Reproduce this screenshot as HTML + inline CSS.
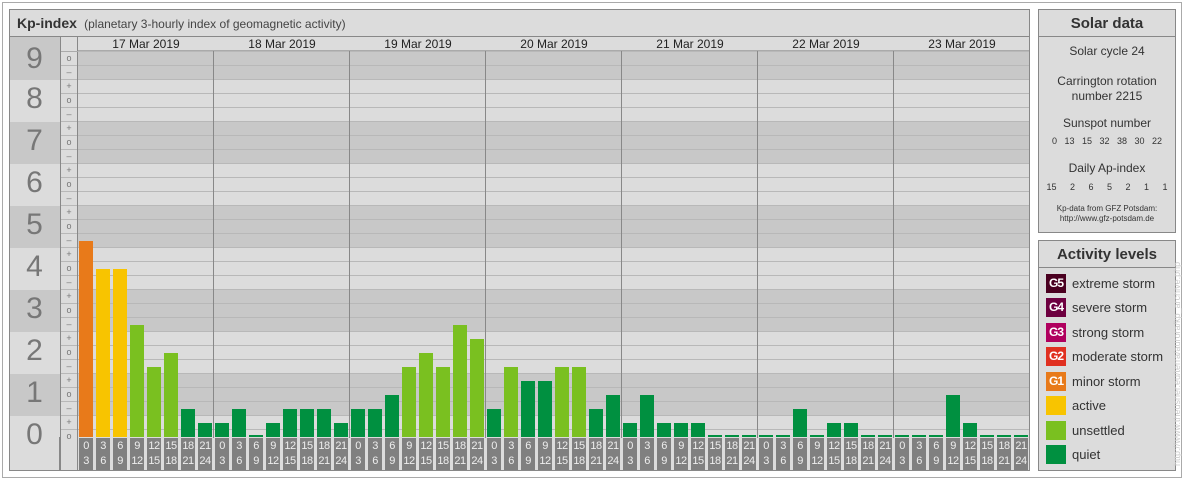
<!DOCTYPE html>
<html><head><meta charset="utf-8"><style>
*{margin:0;padding:0;box-sizing:border-box}
body{width:1184px;height:480px;background:#fff;font-family:"Liberation Sans",sans-serif;position:relative;overflow:hidden;color:#333}
.a{position:absolute}
.outer{left:2px;top:2px;width:1180px;height:476px;border:1px solid #aaa}
.panel{border:1px solid #888;background:#dcdcdc}
.lab{position:absolute;width:14px;height:32px;background:#808080;color:#eee;font-size:11px;line-height:15px;text-align:center;top:438px;padding-top:1px;letter-spacing:-0.5px}
.sym{position:absolute;left:61px;width:16px;text-align:center;font-size:9px;color:#777;line-height:10px}
.big{position:absolute;left:9px;width:51px;text-align:center;font-size:30px;color:#777;line-height:30px}
.date{position:absolute;top:37px;width:136px;text-align:center;font-size:12px;line-height:15px;color:#222}
.sd{position:absolute;left:1038px;width:138px;text-align:center;color:#333}
.lg{position:absolute;left:1046px;width:20px;height:19px;color:#fff;font-size:12px;line-height:19px;text-align:center;font-weight:bold;letter-spacing:-1px}
.lt{position:absolute;left:1072px;font-size:13px;color:#333;line-height:19px}
</style></head><body>
<div class="a outer"></div>
<div class="a panel" style="left:9px;top:9px;width:1021px;height:462px"></div>
<div class="a" style="left:10px;top:10px;width:1019px;height:27px;border-bottom:1px solid #888;background:#dcdcdc"></div>
<div class="a" style="left:17px;top:14px;font-size:14px;line-height:18px"><b style="color:#333">Kp-index</b> <span style="font-size:12px;color:#444">&nbsp;(planetary 3-hourly index of geomagnetic activity)</span></div>
<div class="a" style="left:10px;top:37px;width:50px;height:433px;background:#dcdcdc;border-right:1px solid #888"></div>
<div class="a" style="left:61px;top:37px;width:17px;height:433px;background:#dcdcdc;border-right:1px solid #888"></div>
<div id="bands"></div>
<div class="a" style="left:61px;top:51px;width:17px;height:1px;background:#aaa"></div>
<div class="a" style="left:78px;top:37px;width:951px;height:14px;background:#dcdcdc;border-bottom:1px solid #aaa"></div>
<div class="date" style="left:78px">17 Mar 2019</div>
<div class="date" style="left:214px">18 Mar 2019</div>
<div class="date" style="left:350px">19 Mar 2019</div>
<div class="date" style="left:486px">20 Mar 2019</div>
<div class="date" style="left:622px">21 Mar 2019</div>
<div class="date" style="left:758px">22 Mar 2019</div>
<div class="date" style="left:894px">23 Mar 2019</div>
<div class="big" style="top:44px">9</div>
<div class="big" style="top:84px">8</div>
<div class="big" style="top:126px">7</div>
<div class="big" style="top:168px">6</div>
<div class="big" style="top:210px">5</div>
<div class="big" style="top:252px">4</div>
<div class="big" style="top:294px">3</div>
<div class="big" style="top:336px">2</div>
<div class="big" style="top:378px">1</div>
<div class="big" style="top:420px">0</div>

<div class="a panel" style="left:1038px;top:9px;width:138px;height:224px"></div>
<div class="a" style="left:1039px;top:10px;width:136px;height:27px;border-bottom:1px solid #888"></div>
<div class="sd" style="top:15px;font-size:15px;font-weight:bold;line-height:18px">Solar data</div>
<div class="sd" style="top:44px;font-size:12px;line-height:15px">Solar cycle 24</div>
<div class="sd" style="top:74px;font-size:12px;line-height:15px">Carrington rotation<br>number 2215</div>
<div class="sd" style="top:116px;font-size:12px;line-height:15px">Sunspot number</div>
<div class="sd" style="top:136px;font-size:9px;word-spacing:5px">0 13 15 32 38 30 22</div>
<div class="sd" style="top:161px;font-size:12px;line-height:15px">Daily Ap-index</div>
<div class="sd" style="top:182px;font-size:9px;word-spacing:11px">15 2 6 5 2 1 1</div>
<div class="sd" style="top:204px;font-size:8px;line-height:10px">Kp-data from GFZ Potsdam:<br>http://www.gfz-potsdam.de</div>

<div class="a panel" style="left:1038px;top:240px;width:138px;height:231px"></div>
<div class="a" style="left:1039px;top:241px;width:136px;height:27px;border-bottom:1px solid #888"></div>
<div class="sd" style="top:246px;font-size:15px;font-weight:bold;line-height:18px">Activity levels</div>
<div class="lg" style="top:274px;background:#4a0020">G5</div><div class="lt" style="top:274px">extreme storm</div>
<div class="lg" style="top:298px;background:#6e0040">G4</div><div class="lt" style="top:298px">severe storm</div>
<div class="lg" style="top:323px;background:#b0005e">G3</div><div class="lt" style="top:323px">strong storm</div>
<div class="lg" style="top:347px;background:#e03020">G2</div><div class="lt" style="top:347px">moderate storm</div>
<div class="lg" style="top:372px;background:#e87a1a">G1</div><div class="lt" style="top:372px">minor storm</div>
<div class="lg" style="top:396px;background:#f8c400"></div><div class="lt" style="top:396px">active</div>
<div class="lg" style="top:421px;background:#7ac020"></div><div class="lt" style="top:421px">unsettled</div>
<div class="lg" style="top:445px;background:#009040"></div><div class="lt" style="top:445px">quiet</div>
<div class="a" style="left:1172px;top:466px;transform-origin:0 0;transform:rotate(-90deg);font-size:9px;color:#ccc;white-space:nowrap;width:230px">http://www.theusner.eu/terra/aurora/kp_archive.php</div>

<div class="a" style="left:78px;top:438px;width:951px;height:32px;background:#dcdcdc"></div>
<div class="lab" style="left:79px">0<br>3</div><div class="lab" style="left:96px">3<br>6</div><div class="lab" style="left:113px">6<br>9</div><div class="lab" style="left:130px">9<br>12</div><div class="lab" style="left:147px">12<br>15</div><div class="lab" style="left:164px">15<br>18</div><div class="lab" style="left:181px">18<br>21</div><div class="lab" style="left:198px">21<br>24</div>
<div class="lab" style="left:215px">0<br>3</div><div class="lab" style="left:232px">3<br>6</div><div class="lab" style="left:249px">6<br>9</div><div class="lab" style="left:266px">9<br>12</div><div class="lab" style="left:283px">12<br>15</div><div class="lab" style="left:300px">15<br>18</div><div class="lab" style="left:317px">18<br>21</div><div class="lab" style="left:334px">21<br>24</div>
<div class="lab" style="left:351px">0<br>3</div><div class="lab" style="left:368px">3<br>6</div><div class="lab" style="left:385px">6<br>9</div><div class="lab" style="left:402px">9<br>12</div><div class="lab" style="left:419px">12<br>15</div><div class="lab" style="left:436px">15<br>18</div><div class="lab" style="left:453px">18<br>21</div><div class="lab" style="left:470px">21<br>24</div>
<div class="lab" style="left:487px">0<br>3</div><div class="lab" style="left:504px">3<br>6</div><div class="lab" style="left:521px">6<br>9</div><div class="lab" style="left:538px">9<br>12</div><div class="lab" style="left:555px">12<br>15</div><div class="lab" style="left:572px">15<br>18</div><div class="lab" style="left:589px">18<br>21</div><div class="lab" style="left:606px">21<br>24</div>
<div class="lab" style="left:623px">0<br>3</div><div class="lab" style="left:640px">3<br>6</div><div class="lab" style="left:657px">6<br>9</div><div class="lab" style="left:674px">9<br>12</div><div class="lab" style="left:691px">12<br>15</div><div class="lab" style="left:708px">15<br>18</div><div class="lab" style="left:725px">18<br>21</div><div class="lab" style="left:742px">21<br>24</div>
<div class="lab" style="left:759px">0<br>3</div><div class="lab" style="left:776px">3<br>6</div><div class="lab" style="left:793px">6<br>9</div><div class="lab" style="left:810px">9<br>12</div><div class="lab" style="left:827px">12<br>15</div><div class="lab" style="left:844px">15<br>18</div><div class="lab" style="left:861px">18<br>21</div><div class="lab" style="left:878px">21<br>24</div>
<div class="lab" style="left:895px">0<br>3</div><div class="lab" style="left:912px">3<br>6</div><div class="lab" style="left:929px">6<br>9</div><div class="lab" style="left:946px">9<br>12</div><div class="lab" style="left:963px">12<br>15</div><div class="lab" style="left:980px">15<br>18</div><div class="lab" style="left:997px">18<br>21</div><div class="lab" style="left:1014px">21<br>24</div>

<div class="sym" style="top:53px">o</div><div class="sym" style="top:67px">–</div>
<div class="sym" style="top:81px">+</div><div class="sym" style="top:95px">o</div><div class="sym" style="top:109px">–</div>
<div class="sym" style="top:123px">+</div><div class="sym" style="top:137px">o</div><div class="sym" style="top:151px">–</div>
<div class="sym" style="top:165px">+</div><div class="sym" style="top:179px">o</div><div class="sym" style="top:193px">–</div>
<div class="sym" style="top:207px">+</div><div class="sym" style="top:221px">o</div><div class="sym" style="top:235px">–</div>
<div class="sym" style="top:249px">+</div><div class="sym" style="top:263px">o</div><div class="sym" style="top:277px">–</div>
<div class="sym" style="top:291px">+</div><div class="sym" style="top:305px">o</div><div class="sym" style="top:319px">–</div>
<div class="sym" style="top:333px">+</div><div class="sym" style="top:347px">o</div><div class="sym" style="top:361px">–</div>
<div class="sym" style="top:375px">+</div><div class="sym" style="top:389px">o</div><div class="sym" style="top:403px">–</div>
<div class="sym" style="top:417px">+</div><div class="sym" style="top:431px">o</div>

<script>
(function(){
var h='';
for(var n=0;n<=9;n++){
 var bot=437-21-42*(n-1); if(n==0)bot=437;
 var top=437-21-42*n; if(n==0)top=416;
 var c=(n%2)?'#c8c8c8':'#dcdcdc';
 var topL=(n==9)?37:top, topC=(n==9)?52:top;
 h+='<div class="a" style="left:10px;top:'+topL+'px;width:50px;height:'+(bot-topL)+'px;background:'+c+'"></div>';
 h+='<div class="a" style="left:78px;top:'+topC+'px;width:951px;height:'+(bot-topC)+'px;background:'+c+'"></div>';
}
for(var y=429;y>=51;y-=14){
 h+='<div class="a" style="left:61px;top:'+y+'px;width:968px;height:1px;background:#b8b8b8"></div>';
}
for(var d=1;d<7;d++) h+='<div class="a" style="left:'+(78+136*d-1)+'px;top:37px;width:1px;height:433px;background:#888"></div>';
h+='<div class="a" style="left:60px;top:37px;width:1px;height:433px;background:#888"></div>';
h+='<div class="a" style="left:77px;top:37px;width:1px;height:433px;background:#888"></div>';
var v=[14,12,12,8,5,6,2,1, 1,2,0,1,2,2,2,1, 2,2,3,5,6,5,8,7, 2,5,4,4,5,5,2,3, 1,3,1,1,1,0,0,0, 0,0,2,0,1,1,0,0, 0,0,0,3,1,0,0,0];
for(var i=0;i<56;i++){
 var k=v[i],ht=k?k*14:2;
 var c=k>=14?'#e87a1a':k>=11?'#f8c400':k>=5?'#7ac020':'#009040';
 var x=79+136*Math.floor(i/8)+17*(i%8);
 h+='<div class="a" style="left:'+x+'px;top:'+(437-ht)+'px;width:14px;height:'+ht+'px;background:'+c+'"></div>';
}
document.getElementById('bands').innerHTML=h;
})();
</script>
</body></html>
